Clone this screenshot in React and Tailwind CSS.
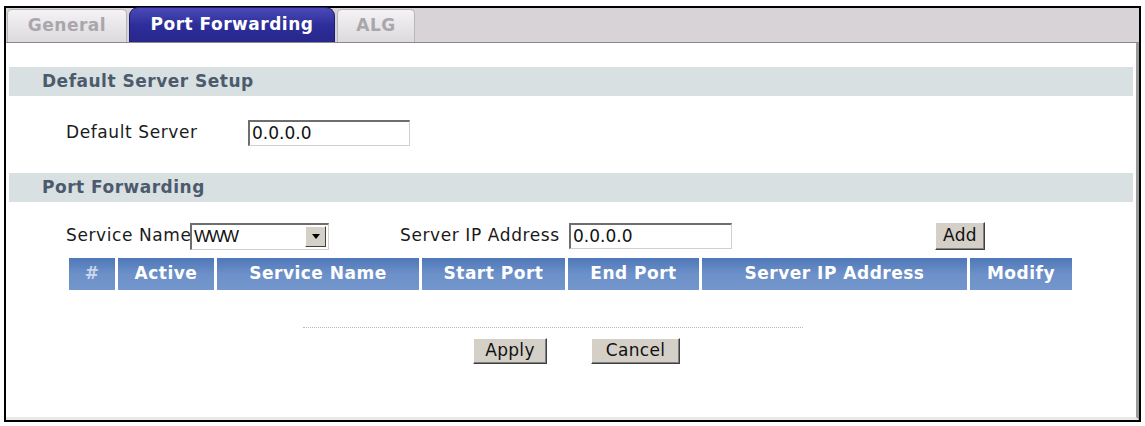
import React from "react";

const font = { fontFamily: '"DejaVu Sans", Verdana, sans-serif' };

function Tab({ label, active, w }) {
  if (active) {
    return (
      <div
        className={`${w} h-[35px] rounded-t-[9px] bg-gradient-to-b from-[#4a4ab8] via-[#2e2e9a] to-[#27278c] border border-[#1d1d70] border-b-0 flex items-center justify-center text-white font-bold text-[17px] tracking-[0.5px]`}
      >
        {label}
      </div>
    );
  }
  return (
    <div
      className={`${w} h-[33px] rounded-t-[5px] bg-gradient-to-b from-[#f4f2f4] to-[#dcdadc] border border-[#b9b6b9] border-b-0 flex items-center justify-center text-[#a9a7ab] font-bold text-[17px] tracking-[0.5px]`}
    >
      {label}
    </div>
  );
}

function SectionBar({ children }) {
  return (
    <div className="mx-[3px] h-[29px] bg-[#d9e0e1] flex items-center pl-[33px] text-[#4c5a6e] font-bold text-[17px] tracking-[0.5px]">
      {children}
    </div>
  );
}

function Inset({ className, children }) {
  return (
    <div
      className={`bg-white border-t-2 border-l-2 border-b border-r border-t-[#6e6e6e] border-l-[#6e6e6e] border-b-[#d4d0c8] border-r-[#d4d0c8] flex items-center ${className}`}
    >
      {children}
    </div>
  );
}

function Btn({ children, className }) {
  return (
    <div
      className={`bg-[#d4d0c8] border border-t-[#ffffff] border-l-[#ffffff] border-b-[#404040] border-r-[#404040] shadow-[inset_-1px_-1px_0_#808080] flex items-center justify-center text-[17px] tracking-[0.3px] text-[#111] ${className}`}
    >
      {children}
    </div>
  );
}

const cols = [
  ["#", "w-[46px]", "text-[#c9d6ec]"],
  ["Active", "w-[96px]", "text-white"],
  ["Service Name", "w-[202px]", "text-white"],
  ["Start Port", "w-[143px]", "text-white"],
  ["End Port", "w-[131px]", "text-white"],
  ["Server IP Address", "w-[265px]", "text-white"],
  ["Modify", "w-[102px]", "text-white"],
];

export default function App() {
  return (
    <div className="w-[1145px] h-[426px] bg-white" style={font}>
      <div className="ml-[4px] mt-[6px] w-[1137px] h-[416px] border-2 border-black flex flex-col bg-white">
        {/* tab bar */}
        <div className="h-[35px] bg-[#d7d3d7] border-b border-[#8d8a8e] flex items-end pl-[1px] gap-[2px]">
          <Tab label="General" w="w-[120px]" />
          <Tab label="Port Forwarding" active w="w-[206px]" />
          <Tab label="ALG" w="w-[78px]" />
        </div>
        <div className="flex-1 border-r-[3px] border-r-[#9a9a9a] border-b-[3px] border-b-[#e9e9e9] flex flex-col">
          <div className="h-[24px]" />
          <SectionBar>Default Server Setup</SectionBar>
          <div className="h-[23px]" />
          <div className="flex items-center h-[28px] pl-[60px]">
            <span className="w-[182px] text-[17px] tracking-[0.6px] text-[#1a1a1a]">Default Server</span>
            <Inset className="w-[162px] h-[26px] pl-[2px] text-[17px] text-[#111]">0.0.0.0</Inset>
          </div>
          <div className="h-[26px]" />
          <SectionBar>Port Forwarding</SectionBar>
          <div className="h-[20px]" />
          <div className="flex items-center h-[28px] pl-[60px]">
            <span className="text-[17px] tracking-[0.6px] text-[#1a1a1a] w-[124px] whitespace-nowrap">Service Name</span>
            <Inset className="w-[139px] h-[27px] pl-[2px] text-[#111] justify-between pr-[2px]">
              <span className="font-['Liberation_Sans'] text-[17px] tracking-[-1.5px] leading-none">WWW</span>
              <div className="w-[21px] h-[21px] bg-[#d4d0c8] border border-t-white border-l-white border-b-[#404040] border-r-[#404040] flex items-center justify-center">
                <svg width="8" height="5" viewBox="0 0 8 5"><path d="M0 0H8L4 5Z" fill="#000" /></svg>
              </div>
            </Inset>
            <span className="ml-[71px] text-[17px] tracking-[0.6px] text-[#1a1a1a] w-[169px] whitespace-nowrap">Server IP Address</span>
            <Inset className="w-[163px] h-[26px] pl-[2px] text-[17px] text-[#111]">0.0.0.0</Inset>
            <Btn className="ml-[203px] w-[50px] h-[28px]">Add</Btn>
          </div>
          <div className="h-[8px]" />
          <div className="flex ml-[63px] gap-[3px] h-[32px]">
            {cols.map(([t, w, c]) => (
              <div
                key={t}
                className={`${w} ${c} h-full bg-gradient-to-b from-[#4f78b8] via-[#6c90c8] to-[#7396cb] flex items-center justify-center font-bold text-[17px] tracking-[0.5px] whitespace-nowrap`}
              >
                {t}
              </div>
            ))}
          </div>
          <div className="h-[37px]" />
          <div className="ml-[297px] w-[500px] border-t border-dotted border-[#b8b8b8]" />
          <div className="flex ml-[467px] mt-[10px] gap-[44px]">
            <Btn className="w-[74px] h-[26px]">Apply</Btn>
            <Btn className="w-[89px] h-[26px]">Cancel</Btn>
          </div>
        </div>
      </div>
    </div>
  );
}
